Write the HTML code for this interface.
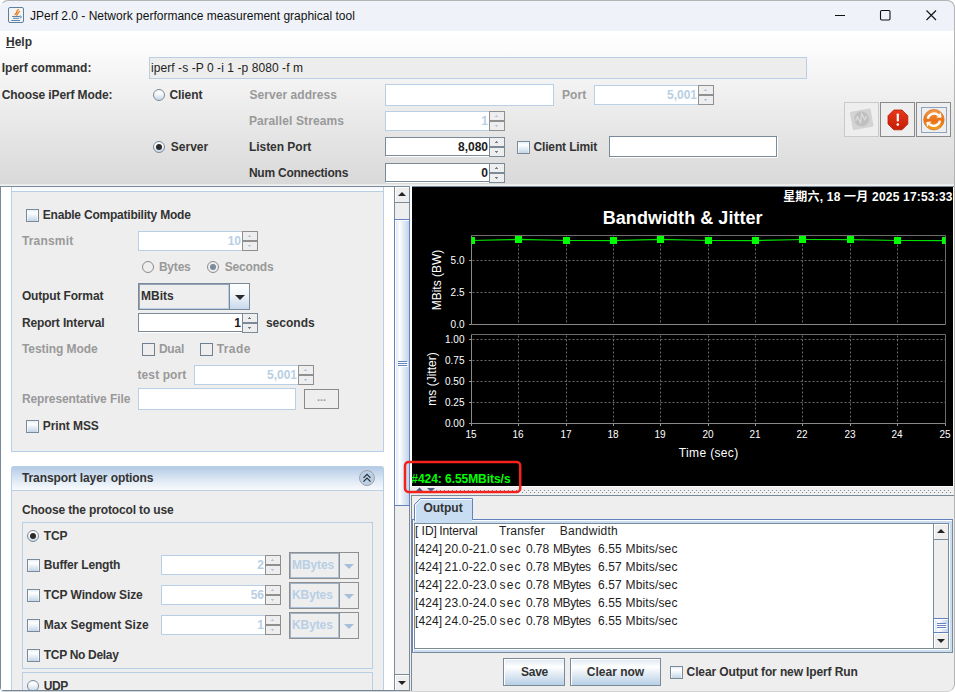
<!DOCTYPE html>
<html>
<head>
<meta charset="utf-8">
<title>JPerf 2.0 - Network performance measurement graphical tool</title>
<style>
*{box-sizing:border-box;margin:0;padding:0}
html,body{width:955px;height:692px;overflow:hidden;background:#fff}
body{font-family:"Liberation Sans","Noto Sans CJK SC",sans-serif;font-size:12px;color:#333;position:relative}
.abs{position:absolute}
.b{font-weight:bold}
.lbl{position:absolute;font-weight:bold;font-size:12px;line-height:14px;white-space:nowrap;color:#333}
.dis{color:#999}
#win{position:absolute;left:0;top:0;width:955px;height:691px;border-radius:8px 8px 8px 4px;overflow:hidden;background:#eee}
#winb{position:absolute;left:0;top:0;width:955px;height:692px;border-radius:8px 8px 8px 4px;border:1px solid #b4b4b4;border-left-color:transparent;border-bottom-color:#d4d4d4;pointer-events:none;z-index:50}
#title{position:absolute;left:0;top:0;width:955px;height:31px;background:#eff2f9}
#title .t{position:absolute;left:30px;top:8px;font-size:12px;line-height:16px;color:#111;white-space:nowrap}
#menubar{position:absolute;left:0;top:31px;width:955px;height:22px;background:linear-gradient(#ffffff,#fbfbfb)}
#top{position:absolute;left:0;top:53px;width:955px;height:131px;background:linear-gradient(#fafafa,#d9d9d9)}
.tf{position:absolute;background:#fff;border:1px solid #7a8a99;box-shadow:1px 1px 0 #fff}
.tf.d{border-color:#b8cfe5;box-shadow:none}
.tf span{position:absolute;right:1px;top:2px;font-weight:bold;line-height:14px;color:#1c1c1c}
.tf.d span{color:#b8cfe5}
.sp{position:absolute;width:16px;background:#eee}
.sp i:first-child{top:0}
.sp i:last-child{top:10px}
.sp.d i{border-color:#8f8f8f;background:#eee}
.sp i:before{content:"";position:absolute;left:6px;width:1px;height:1px;background:#6d7b8a}
.sp i:first-child:before{top:3px;box-shadow:-1px 1px 0 #6d7b8a,0 1px 0 #6d7b8a,1px 1px 0 #6d7b8a}
.sp i:last-child:before{top:4px;box-shadow:-1px -1px 0 #6d7b8a,0 -1px 0 #6d7b8a,1px -1px 0 #6d7b8a}
.sp.d i:before{background:#b3c8de}
.sp.d i:first-child:before{box-shadow:-1px 1px 0 #b3c8de,0 1px 0 #b3c8de,1px 1px 0 #b3c8de}
.sp.d i:last-child:before{box-shadow:-1px -1px 0 #b3c8de,0 -1px 0 #b3c8de,1px -1px 0 #b3c8de}
.cb{position:absolute;width:13px;height:13px;border:1px solid #7a8a99;background:linear-gradient(#e6eff8,#fff 28%,#c3d5e8);box-shadow:inset 1px 0 0 rgba(255,255,255,.6),inset -1px 0 0 rgba(255,255,255,.6)}
.cb.d{border-color:#6f7f90;background:#eee;box-shadow:none}
.rb{position:absolute;width:12px;height:12px;border:1px solid #7a8a99;border-radius:50%;background:linear-gradient(#f4f8fc,#fff 25%,#c6d7e9)}
.rb.on:after{content:"";position:absolute;left:2px;top:2px;width:6px;height:6px;border-radius:50%;background:#2b2b2b}
.rb.d{border-color:#8c8c8c;background:#eee}
.rb.d.on:after{background:#7a8a99}

.sp i{position:absolute;left:0;width:16px;height:10px;border:1px solid #7a8a99;background:#eee}
.pnl{position:absolute;background:#eee;border:1px solid #b8cfe5}
.combo{position:absolute;border:1px solid #7a8a99;background:#eee}
.combo .tx{position:absolute;left:0;top:0;bottom:0;padding-left:2px;font-weight:bold;line-height:14px;box-shadow:inset 1px 1px 0 #93a3b4,inset -1px -1px 0 #b8cfe5}
.combo .ar{position:absolute;right:0;top:0;bottom:0;border-left:1px solid #7a8a99;background:linear-gradient(#fff,#f2f6fa 40%,#c6d9ec)}
.combo .ar:after{content:"";position:absolute;left:50%;top:50%;margin-left:-5px;margin-top:-2px;border:5px solid transparent;border-top:5px solid #2a2a2a;border-bottom:none}
.combo.d{border-color:#8f8f8f}
.combo.d .tx{color:#b8cfe5;box-shadow:inset 1px 1px 0 #9fb2c6,inset -1px -1px 0 #a9c0d8}
.combo.d .ar{border-left-color:#8f8f8f;background:#eee}
.combo.d .ar:after{border-top-color:#a6bfdb}
.btn{position:absolute;border:1px solid #7a8a99;background:linear-gradient(#dde8f3,#fff 30%,#b8cfe5);box-shadow:inset 1px 1px 0 #fff;font-weight:bold;text-align:center;color:#333}
.sbv{position:absolute;width:16px;background:#eee;border-left:1px solid #7a8a99;border-right:1px solid #7a8a99}
.sbb{position:absolute;left:0;width:14px;height:17px;background:#eee;border-top:1px solid #7a8a99;border-bottom:1px solid #7a8a99;box-shadow:inset 1px 1px 0 #fff}
.sbb:after{content:"";position:absolute;left:3px;border:4px solid transparent}
.sbb.up:after{border-bottom:4px solid #222;border-top:none;top:5px}
.sbb.dn:after{border-top:4px solid #222;border-bottom:none;top:6px}
.thumb{position:absolute;left:-1px;width:16px;border:1px solid #6382bf;background:linear-gradient(90deg,#d3e1ef,#fff 32%,#e3ecf5 60%,#c2d5e9);box-shadow:inset 1px 1px 0 #fff;z-index:2}
.grip{position:absolute;left:3px;width:9px;height:1px;background:#6382bf;box-shadow:1px 1px 0 #fff}
</style>
</head>
<body>
<div id="win">
  <div id="title">
    <svg class="abs" style="left:8px;top:7px" width="16" height="16" viewBox="0 0 16 16">
      <rect x="0.5" y="0.5" width="15" height="15" rx="1.5" fill="#f3f3f1" stroke="#5f7f9f"/>
      <path d="M10.300 2.600C7.800 4.300 9.800 5.600 7 7.600M11.400 4.500C9.200 5.600 10.600 6.800 8.600 8.200" stroke="#e8730c" stroke-width="1.250" fill="none" stroke-linecap="round"/>
      <path d="M4.200 9.500H12M5 11.300H11M3.300 13.500H12" stroke="#5b84b1" stroke-width="1" fill="none"/>
      <path d="M11.800 8.600L13.600 10 11.800 11.400" stroke="#5b84b1" stroke-width="1" fill="none"/>
    </svg>
    <div class="t">JPerf 2.0 - Network performance measurement graphical tool</div>
    <svg class="abs" style="left:829px;top:5px" width="120" height="22" viewBox="0 0 120 22">
      <path d="M6 10.500h10" stroke="#111" stroke-width="1.1" fill="none"/>
      <rect x="51.5" y="5.5" width="9.500" height="9.500" rx="1.2" stroke="#111" stroke-width="1.1" fill="none"/>
      <path d="M97.500 5.500l9.500 9.500M107 5.500l-9.500 9.500" stroke="#111" stroke-width="1.1" fill="none"/>
    </svg>
  </div>
  <div id="menubar">
    <div class="lbl" style="left:6px;top:4px"><u>H</u>elp</div>
  </div>
  <div id="top">
  </div>
  <div class="abs" style="left:0;top:184px;width:955px;height:2px;background:linear-gradient(#e8e8e8,#f3f3f3)"></div>
  <!-- top panel widgets (page coords) -->
  <div class="lbl" style="left:1.8px;top:61px;letter-spacing:-0.03px">Iperf command:</div>
  <div class="abs" style="left:149px;top:57px;width:658px;height:22px;border:1px solid #b8cfe5;background:#ededed"><span class="abs" style="left:1px;top:3px;font-size:12px;line-height:14px;white-space:nowrap;color:#222;letter-spacing:0.07px">iperf -s -P 0 -i 1 -p 8080 -f m</span></div>
  <div class="lbl" style="left:1.8px;top:88px;letter-spacing:-0.12px">Choose iPerf Mode:</div>
  <div class="rb" style="left:153px;top:89px"></div>
  <div class="lbl" style="left:169.5px;top:88px;letter-spacing:-0.09px">Client</div>
  <div class="rb on" style="left:153px;top:141px"></div>
  <div class="lbl" style="left:170.8px;top:140px;letter-spacing:0.01px">Server</div>
  <div class="lbl dis" style="left:249.4px;top:88px;letter-spacing:0.06px">Server address</div>
  <div class="lbl dis" style="left:248.9px;top:114px;letter-spacing:0.11px">Parallel Streams</div>
  <div class="lbl" style="left:248.9px;top:140px;letter-spacing:-0.03px">Listen Port</div>
  <div class="lbl" style="left:248.9px;top:166px;letter-spacing:-0.23px">Num Connections</div>
  <div class="tf d" style="left:385px;top:84px;width:169px;height:22px"></div>
  <div class="lbl dis" style="left:561.9px;top:88px;letter-spacing:0.10px">Port</div>
  <div class="tf d" style="left:594px;top:85px;width:105px;height:20px"><span>5,001</span></div>
  <div class="sp d" style="left:698px;top:85px"><i></i><i></i></div>
  <div class="tf d" style="left:385px;top:111px;width:105px;height:20px"><span>1</span></div>
  <div class="sp d" style="left:489px;top:111px"><i></i><i></i></div>
  <div class="tf" style="left:385px;top:137px;width:105px;height:19px"><span>8,080</span></div>
  <div class="sp" style="left:489px;top:137px"><i></i><i></i></div>
  <div class="tf" style="left:385px;top:163px;width:105px;height:19px"><span>0</span></div>
  <div class="sp" style="left:489px;top:163px"><i></i><i></i></div>
  <div class="cb" style="left:517px;top:141px"></div>
  <div class="lbl" style="left:533.4px;top:140px;letter-spacing:-0.13px">Client Limit</div>
  <div class="tf" style="left:609px;top:136px;width:168px;height:21px"></div>
  <!-- icon buttons -->
  <div class="abs" style="left:844px;top:102px;width:35px;height:35px;border:1px solid #c9c9c9;background:#eee"></div>
  <svg class="abs" style="left:844px;top:102px" width="35" height="35" viewBox="0 0 35 35">
    <g transform="rotate(-10 17.700 17.200)"><rect x="7.200" y="8" width="21" height="18.500" rx="1.500" fill="#d3d3d3"/><circle cx="17.700" cy="16.900" r="7.700" fill="#bfbfbf" stroke="#cfcfcf" stroke-width="0.800"/><path d="M11.300 17.800l2.600-3.600 2.100 6.200 2.600-8.400 2.100 6.200 2.600-3.200" stroke="#dadada" stroke-width="1.300" fill="none"/></g>
  </svg>
  <div class="abs" style="left:880px;top:102px;width:35px;height:35px;border:1px solid #8a8a8a;background:#eee"></div>
  <svg class="abs" style="left:880px;top:102px" width="35" height="35" viewBox="0 0 35 35">
    <defs><linearGradient id="rg" x1="0" y1="0" x2="0" y2="1"><stop offset="0" stop-color="#e8391a"/><stop offset="1" stop-color="#c41d05"/></linearGradient></defs>
    <path d="M13.800 8h8.200l5.800 5.800v8.200l-5.800 5.800h-8.200l-5.800-5.800v-8.200z" fill="url(#rg)" stroke="#b81a04" stroke-width="0.8"/>
    <rect x="16.700" y="11.500" width="2.200" height="8" rx="0.8" fill="#fff"/><circle cx="17.800" cy="22.600" r="1.300" fill="#fff"/>
  </svg>
  <div class="abs" style="left:916px;top:102px;width:35px;height:35px;border:1px solid #8a8a8a;background:#eee"></div>
  <div class="abs" style="left:921px;top:107px;width:26px;height:26px;border:1px solid #8ea3c0"></div>
  <svg class="abs" style="left:916px;top:102px" width="35" height="35" viewBox="0 0 35 35">
    <defs><linearGradient id="og" x1="0" y1="0" x2="0" y2="1"><stop offset="0" stop-color="#f39a4e"/><stop offset="0.550" stop-color="#ea6f14"/><stop offset="1" stop-color="#f5a623"/></linearGradient></defs>
    <circle cx="17.900" cy="17.700" r="10.200" fill="url(#og)" stroke="#d9731c" stroke-width="0.8"/>
    <path d="M11.800 16.800a6.300 6.300 0 0 1 10.600-3.400" stroke="#fff" stroke-width="2.400" fill="none"/>
    <path d="M20.500 15.800l5-0.300-0.800-5z" fill="#fff"/>
    <path d="M24 18.600a6.300 6.300 0 0 1-10.600 3.400" stroke="#fff" stroke-width="2.400" fill="none"/>
    <path d="M15.300 19.600l-5 0.300 0.800 5z" fill="#fff"/>
  </svg>
  <!-- left scroll pane -->
  <div class="abs" style="left:0;top:186px;width:411px;height:505px;background:#fff;border:1px solid #7a8a99;border-right:none"></div>
  <div class="pnl" style="left:11px;top:187px;width:373px;height:265px;border-top:none"></div>
  <div class="abs" style="left:12px;top:187px;width:371px;height:4px;background:linear-gradient(#f3f7fc,#fbfcfe)"></div>
  <div class="abs" style="left:11px;top:191px;width:373px;height:1px;background:#b8cfe5"></div>
  <div class="cb" style="left:26px;top:209px"></div>
  <div class="lbl" style="left:42.8px;top:208px;letter-spacing:-0.22px">Enable Compatibility Mode</div>
  <div class="lbl dis" style="left:21.9px;top:234px;letter-spacing:0.18px">Transmit</div>
  <div class="tf d" style="left:138px;top:231px;width:105px;height:20px"><span>10</span></div>
  <div class="sp d" style="left:242px;top:231px"><i></i><i></i></div>
  <div class="rb d" style="left:142px;top:261px"></div>
  <div class="lbl dis" style="left:158.9px;top:260px;letter-spacing:-0.20px">Bytes</div>
  <div class="rb d on" style="left:207px;top:261px"></div>
  <div class="lbl dis" style="left:224.8px;top:260px;letter-spacing:-0.19px">Seconds</div>
  <div class="lbl" style="left:21.9px;top:289px;letter-spacing:-0.15px">Output Format</div>
  <div class="combo" style="left:138px;top:283px;width:112px;height:27px"><div class="tx" style="right:20px;padding-top:5px">MBits</div><div class="ar" style="width:20px"></div></div>
  <div class="lbl" style="left:21.9px;top:316px;letter-spacing:-0.14px">Report Interval</div>
  <div class="tf" style="left:138px;top:313px;width:105px;height:19px"><span>1</span></div>
  <div class="sp" style="left:242px;top:313px"><i></i><i></i></div>
  <div class="lbl" style="left:265.9px;top:316px;letter-spacing:0.02px">seconds</div>
  <div class="lbl dis" style="left:21.9px;top:342px;letter-spacing:-0.05px">Testing Mode</div>
  <div class="cb d" style="left:142px;top:343px"></div>
  <div class="lbl dis" style="left:158.9px;top:342px;letter-spacing:-0.21px">Dual</div>
  <div class="cb d" style="left:200px;top:343px"></div>
  <div class="lbl dis" style="left:216.7px;top:342px;letter-spacing:0.42px">Trade</div>
  <div class="lbl dis" style="left:137.5px;top:368px;letter-spacing:0.10px">test port</div>
  <div class="tf d" style="left:194px;top:365px;width:105px;height:20px"><span>5,001</span></div>
  <div class="sp d" style="left:298px;top:365px"><i></i><i></i></div>
  <div class="lbl dis" style="left:21.9px;top:392px;letter-spacing:-0.09px">Representative File</div>
  <div class="tf d" style="left:138px;top:388px;width:158px;height:22px"></div>
  <div class="abs" style="left:304px;top:389px;width:35px;height:20px;border:1px solid #8a8a8a;background:#eee;color:#999;font-weight:bold;text-align:center;line-height:14px;font-size:11px">...</div>
  <div class="cb" style="left:26px;top:420px"></div>
  <div class="lbl" style="left:42.8px;top:419px;letter-spacing:-0.08px">Print MSS</div>
  <!-- task pane -->
  <div class="abs" style="left:11px;top:466px;width:373px;height:24px;border:1px solid #b8cfe5;border-bottom:none;border-radius:3px 3px 0 0;background:linear-gradient(#b3cae5,#d6e3f2 45%,#f9fbfd)"></div>
  <div class="lbl" style="left:21.9px;top:471px;letter-spacing:-0.08px">Transport layer options</div>
  <div class="abs" style="left:359px;top:470px;width:16px;height:16px;border-radius:50%;border:1px solid #a3a3a3;background:#b9d0e8"></div>
  <svg class="abs" style="left:359px;top:470px" width="16" height="16" viewBox="0 0 16 16"><path d="M4.500 7.800L8 4.300 11.500 7.800M4.500 11.600L8 8.100 11.500 11.600" stroke="#2e2e2e" stroke-width="1.200" fill="none"/></svg>
  <div class="pnl" style="left:11px;top:490px;width:373px;height:211px"></div>
  <div class="lbl" style="left:21.9px;top:503px;letter-spacing:-0.14px">Choose the protocol to use</div>
  <div class="pnl" style="left:22px;top:522px;width:351px;height:147px"></div>
  <div class="rb on" style="left:27px;top:530px"></div>
  <div class="lbl" style="left:43.8px;top:529px;letter-spacing:-0.20px">TCP</div>
  <div class="cb" style="left:27px;top:559px"></div>
  <div class="lbl" style="left:43.8px;top:558px;letter-spacing:-0.17px">Buffer Length</div>
  <div class="tf d" style="left:161px;top:555px;width:105px;height:20px"><span>2</span></div>
  <div class="sp d" style="left:265px;top:555px"><i></i><i></i></div>
  <div class="combo d" style="left:289px;top:552px;width:70px;height:27px"><div class="tx" style="right:19px;padding-top:5px;letter-spacing:-0.1px">MBytes</div><div class="ar" style="width:19px"></div></div>
  <div class="cb" style="left:27px;top:589px"></div>
  <div class="lbl" style="left:43.8px;top:588px;letter-spacing:-0.10px">TCP Window Size</div>
  <div class="tf d" style="left:161px;top:585px;width:105px;height:20px"><span>56</span></div>
  <div class="sp d" style="left:265px;top:585px"><i></i><i></i></div>
  <div class="combo d" style="left:289px;top:582px;width:70px;height:27px"><div class="tx" style="right:19px;padding-top:5px;letter-spacing:-0.1px">KBytes</div><div class="ar" style="width:19px"></div></div>
  <div class="cb" style="left:27px;top:619px"></div>
  <div class="lbl" style="left:43.8px;top:618px;letter-spacing:0.01px">Max Segment Size</div>
  <div class="tf d" style="left:161px;top:615px;width:105px;height:20px"><span>1</span></div>
  <div class="sp d" style="left:265px;top:615px"><i></i><i></i></div>
  <div class="combo d" style="left:289px;top:612px;width:70px;height:27px"><div class="tx" style="right:19px;padding-top:5px;letter-spacing:-0.1px">KBytes</div><div class="ar" style="width:19px"></div></div>
  <div class="cb" style="left:27px;top:649px"></div>
  <div class="lbl" style="left:43.8px;top:648px;letter-spacing:-0.31px">TCP No Delay</div>
  <div class="pnl" style="left:22px;top:672px;width:351px;height:40px"></div>
  <div class="rb" style="left:27px;top:680px"></div>
  <div class="lbl" style="left:43.8px;top:679px;letter-spacing:-0.47px">UDP</div>
  <div class="abs" style="left:0;top:690px;width:411px;height:1px;background:#74869a"></div>
  <!-- left scrollbar -->
  <div class="sbv" style="left:394px;top:186px;height:505px">
    <div class="sbb up" style="top:0"></div>
    <div class="thumb" style="top:33px;height:287px"><div class="grip" style="top:141px"></div><div class="grip" style="top:143px"></div><div class="grip" style="top:145px"></div></div>
    <div class="sbb dn" style="top:488px"></div>
  </div>
  <!-- right side -->
  <div class="abs" style="left:410px;top:186px;width:544px;height:505px;background:#eee"></div>
  <div class="abs" style="left:412px;top:186px;width:542px;height:1px;background:#7a8a99"></div>
  <div class="abs" style="left:410px;top:186px;width:2px;height:300px;background:#fff"></div>
  <div class="abs" style="left:953px;top:187px;width:1px;height:300px;background:#fff"></div>
<svg class="abs" style="left:412px;top:187px" width="541" height="299" viewBox="412 187 541 299" font-family="'Liberation Sans','Noto Sans CJK SC',sans-serif">
<rect x="412" y="187" width="541" height="299" fill="#000"/>
<path d="M518.5 236.5V324.5M518.5 335.5V423.5M566.5 236.5V324.5M566.5 335.5V423.5M613.5 236.5V324.5M613.5 335.5V423.5M660.5 236.5V324.5M660.5 335.5V423.5M708.5 236.5V324.5M708.5 335.5V423.5M755.5 236.5V324.5M755.5 335.5V423.5M802.5 236.5V324.5M802.5 335.5V423.5M850.5 236.5V324.5M850.5 335.5V423.5M897.5 236.5V324.5M897.5 335.5V423.5M472.5 260.5H945.5M472.5 292.5H945.5M472.5 339.5H945.5M472.5 360.5H945.5M472.5 381.5H945.5M472.5 402.5H945.5" stroke="#6a6a6a" stroke-width="1" stroke-dasharray="2 2" fill="none"/>
<path d="M471.5 235.5H945.5V324.5M471.5 334.5H945.5V423.5" stroke="#6c6c6c" stroke-width="1" fill="none"/>
<path d="M471.5 235.5V324.5H945.5M471.5 334.5V423.5H945.5" stroke="#888" stroke-width="1" fill="none"/>
<path d="M469.0 260.5H471.5M469.0 292.5H471.5M469.0 324.5H471.5M469.0 339.5H471.5M469.0 360.5H471.5M469.0 381.5H471.5M469.0 402.5H471.5M469.0 423.5H471.5M471.5 423.5V426.0M518.5 423.5V426.0M566.5 423.5V426.0M613.5 423.5V426.0M660.5 423.5V426.0M708.5 423.5V426.0M755.5 423.5V426.0M802.5 423.5V426.0M850.5 423.5V426.0M897.5 423.5V426.0M945.5 423.5V426.0" stroke="#999" stroke-width="1" fill="none"/>
<clipPath id="cp"><rect x="471.5" y="235.5" width="474.0" height="89.0"/></clipPath>
<g clip-path="url(#cp)"><polyline points="471.5,240.5 518.5,239.5 566.5,240.5 613.5,240.5 660.5,239.5 708.5,240.5 755.5,240.5 802.5,239.5 850.5,239.5 897.5,240.5 945.5,240.5" stroke="#00e000" stroke-width="1.25" fill="none"/>
<rect x="468.0" y="237.0" width="7" height="7" fill="#00ff00"/>
<rect x="515.0" y="236.0" width="7" height="7" fill="#00ff00"/>
<rect x="563.0" y="237.0" width="7" height="7" fill="#00ff00"/>
<rect x="610.0" y="237.0" width="7" height="7" fill="#00ff00"/>
<rect x="657.0" y="236.0" width="7" height="7" fill="#00ff00"/>
<rect x="705.0" y="237.0" width="7" height="7" fill="#00ff00"/>
<rect x="752.0" y="237.0" width="7" height="7" fill="#00ff00"/>
<rect x="799.0" y="236.0" width="7" height="7" fill="#00ff00"/>
<rect x="847.0" y="236.0" width="7" height="7" fill="#00ff00"/>
<rect x="894.0" y="237.0" width="7" height="7" fill="#00ff00"/>
<rect x="942.0" y="237.0" width="7" height="7" fill="#00ff00"/>
</g>
<text x="464.5" y="264" text-anchor="end" font-size="10" fill="#fff" >5.0</text>
<text x="464.5" y="296" text-anchor="end" font-size="10" fill="#fff" >2.5</text>
<text x="464.5" y="328" text-anchor="end" font-size="10" fill="#fff" >0.0</text>
<text x="464.5" y="343" text-anchor="end" font-size="10" fill="#fff" >1.00</text>
<text x="464.5" y="364" text-anchor="end" font-size="10" fill="#fff" >0.75</text>
<text x="464.5" y="385" text-anchor="end" font-size="10" fill="#fff" >0.50</text>
<text x="464.5" y="406" text-anchor="end" font-size="10" fill="#fff" >0.25</text>
<text x="464.5" y="427" text-anchor="end" font-size="10" fill="#fff" >0.00</text>
<text x="471.0" y="438" text-anchor="middle" font-size="10" fill="#fff" >15</text>
<text x="518.0" y="438" text-anchor="middle" font-size="10" fill="#fff" >16</text>
<text x="566.0" y="438" text-anchor="middle" font-size="10" fill="#fff" >17</text>
<text x="613.0" y="438" text-anchor="middle" font-size="10" fill="#fff" >18</text>
<text x="660.0" y="438" text-anchor="middle" font-size="10" fill="#fff" >19</text>
<text x="708.0" y="438" text-anchor="middle" font-size="10" fill="#fff" >20</text>
<text x="755.0" y="438" text-anchor="middle" font-size="10" fill="#fff" >21</text>
<text x="802.0" y="438" text-anchor="middle" font-size="10" fill="#fff" >22</text>
<text x="850.0" y="438" text-anchor="middle" font-size="10" fill="#fff" >23</text>
<text x="897.0" y="438" text-anchor="middle" font-size="10" fill="#fff" >24</text>
<text x="945.0" y="438" text-anchor="middle" font-size="10" fill="#fff" >25</text>
<text x="708.7" y="457" text-anchor="middle" font-size="12" fill="#fff" letter-spacing="0.35">Time (sec)</text>
<text transform="translate(441,280) rotate(-90)" text-anchor="middle" font-size="12" fill="#fff">MBits (BW)</text>
<text transform="translate(435.5,379) rotate(-90)" text-anchor="middle" font-size="12" fill="#fff">ms (Jitter)</text>
<text x="682.7" y="224" text-anchor="middle" font-size="18" fill="#fff" font-weight="bold" letter-spacing="0.05">Bandwidth &amp; Jitter</text>
<text x="952.7" y="201" text-anchor="end" font-size="12" fill="#fff" font-weight="bold" letter-spacing="0.2">星期六, 18 一月 2025 17:53:33</text>
<text x="411.300" y="483" font-size="12" font-weight="bold" fill="#00ff00" letter-spacing="-0.05">#424: 6.55MBits/s</text>
</svg>
  <!-- divider -->
  <div class="abs" style="left:410px;top:486px;width:544px;height:9px;background:#eee;border-top:1px solid #fafafa"></div>
  <svg class="abs" style="left:412px;top:486px" width="542" height="9" viewBox="0 0 542 9">
    <defs><pattern id="dots" x="0" y="0" width="4" height="4" patternUnits="userSpaceOnUse"><rect x="0" y="0" width="1" height="1" fill="#7a8a99"/><rect x="1" y="1" width="1" height="1" fill="#fff"/><rect x="2" y="2" width="1" height="1" fill="#7a8a99"/><rect x="3" y="3" width="1" height="1" fill="#fff"/></pattern></defs>
    <rect x="24" y="4" width="516" height="4" fill="url(#dots)"/>
    <path d="M4 5l3.500-3.500 3.500 3.500zM15 2h8l-4 4z" fill="#4a5f8f"/>
  </svg>
  <!-- tabbed pane -->
  <div class="abs" style="left:411px;top:495px;width:543px;height:196px;border-top:1px solid #7a8a99;border-left:1px solid #7a8a99;background:#eee"></div>
  <div class="abs" style="left:412px;top:519px;width:541px;height:134px;border:1px solid #6382bf;border-bottom-color:#7a8a99;border-right-color:#7a8a99;background:#c8ddf2;box-shadow:inset 1px 1px 0 #fff"></div>
  <svg class="abs" style="left:414px;top:498px" width="60" height="24" viewBox="0 0 60 24">
    <path d="M0.500 23V6.500L6.500 0.500H58.500V21.500" fill="#c8ddf2" stroke="#6382bf" stroke-width="1"/>
    <path d="M1.500 23V7L7 1.500H58" fill="none" stroke="#fff" stroke-width="1"/>
    <rect x="1" y="21" width="57" height="3" fill="#c8ddf2"/>
    <rect x="1" y="21" width="1" height="3" fill="#fff"/>
  </svg>
  <div class="lbl" style="left:423.4px;top:501px;letter-spacing:-0.01px">Output</div>
  <div class="abs" style="left:414px;top:523px;width:535px;height:126px;border:1px solid #7a8a99;background:#fff;box-shadow:1px 1px 0 #fff"></div>
  <div class="abs out" style="left:0;top:522px;font-size:12px;line-height:18px;color:#222;white-space:pre">
<div class="abs" style="left:0;top:0px;height:18px"><span class="abs" style="left:415.0px;letter-spacing:-0.03px">[ ID]</span><span class="abs" style="left:439.2px;letter-spacing:-0.12px">Interval</span><span class="abs" style="left:499.1px;letter-spacing:0.20px">Transfer</span><span class="abs" style="left:559.8px;letter-spacing:0.24px">Bandwidth</span></div>
<div class="abs" style="left:0;top:18px;height:18px"><span class="abs" style="left:415.0px;letter-spacing:0.07px">[424]</span><span class="abs" style="left:444.6px;letter-spacing:0.17px">20.0-21.0</span><span class="abs" style="left:499.6px;letter-spacing:1.11px">sec</span><span class="abs" style="left:526.0px;letter-spacing:-0.09px">0.78</span><span class="abs" style="left:552.9px;letter-spacing:-0.38px">MBytes</span><span class="abs" style="left:597.9px;letter-spacing:0.15px">6.55</span><span class="abs" style="left:625.5px;letter-spacing:0.16px">Mbits/sec</span></div>
<div class="abs" style="left:0;top:36px;height:18px"><span class="abs" style="left:415.0px;letter-spacing:0.07px">[424]</span><span class="abs" style="left:444.6px;letter-spacing:0.17px">21.0-22.0</span><span class="abs" style="left:499.6px;letter-spacing:1.11px">sec</span><span class="abs" style="left:526.0px;letter-spacing:-0.09px">0.78</span><span class="abs" style="left:552.9px;letter-spacing:-0.38px">MBytes</span><span class="abs" style="left:597.9px;letter-spacing:0.15px">6.57</span><span class="abs" style="left:625.5px;letter-spacing:0.16px">Mbits/sec</span></div>
<div class="abs" style="left:0;top:54px;height:18px"><span class="abs" style="left:415.0px;letter-spacing:0.07px">[424]</span><span class="abs" style="left:444.6px;letter-spacing:0.17px">22.0-23.0</span><span class="abs" style="left:499.6px;letter-spacing:1.11px">sec</span><span class="abs" style="left:526.0px;letter-spacing:-0.09px">0.78</span><span class="abs" style="left:552.9px;letter-spacing:-0.38px">MBytes</span><span class="abs" style="left:597.9px;letter-spacing:0.15px">6.57</span><span class="abs" style="left:625.5px;letter-spacing:0.16px">Mbits/sec</span></div>
<div class="abs" style="left:0;top:72px;height:18px"><span class="abs" style="left:415.0px;letter-spacing:0.07px">[424]</span><span class="abs" style="left:444.6px;letter-spacing:0.17px">23.0-24.0</span><span class="abs" style="left:499.6px;letter-spacing:1.11px">sec</span><span class="abs" style="left:526.0px;letter-spacing:-0.09px">0.78</span><span class="abs" style="left:552.9px;letter-spacing:-0.38px">MBytes</span><span class="abs" style="left:597.9px;letter-spacing:0.15px">6.55</span><span class="abs" style="left:625.5px;letter-spacing:0.16px">Mbits/sec</span></div>
<div class="abs" style="left:0;top:90px;height:18px"><span class="abs" style="left:415.0px;letter-spacing:0.07px">[424]</span><span class="abs" style="left:444.6px;letter-spacing:0.17px">24.0-25.0</span><span class="abs" style="left:499.6px;letter-spacing:1.11px">sec</span><span class="abs" style="left:526.0px;letter-spacing:-0.09px">0.78</span><span class="abs" style="left:552.9px;letter-spacing:-0.38px">MBytes</span><span class="abs" style="left:597.9px;letter-spacing:0.15px">6.55</span><span class="abs" style="left:625.5px;letter-spacing:0.16px">Mbits/sec</span></div>
</div>
  <div class="sbv" style="left:933px;top:523px;height:126px">
    <div class="sbb up" style="top:0"></div>
    <div class="thumb" style="top:95px;height:15px"><div class="grip" style="top:4px"></div><div class="grip" style="top:6px"></div><div class="grip" style="top:8px"></div></div>
    <div class="sbb dn" style="top:109px"></div>
  </div>
  <div class="btn" style="left:503px;top:658px;width:62px;height:28px;line-height:26px;letter-spacing:-0.3px;text-indent:1px">Save</div>
  <div class="btn" style="left:570px;top:658px;width:91px;height:28px;line-height:26px">Clear now</div>
  <div class="cb" style="left:670px;top:666px"></div>
  <div class="lbl" style="left:686.6px;top:665px;letter-spacing:-0.12px">Clear Output for new Iperf Run</div>
  <!-- red annotation -->
  <svg class="abs" style="left:400px;top:457px;z-index:5" width="126" height="40" viewBox="400 457 126 40"><rect x="405" y="462.100" width="115.200" height="29.900" rx="3.500" fill="none" stroke="#f3221b" stroke-width="2.500"/></svg>
</div>
<div id="winb"></div>
</body>
</html>
